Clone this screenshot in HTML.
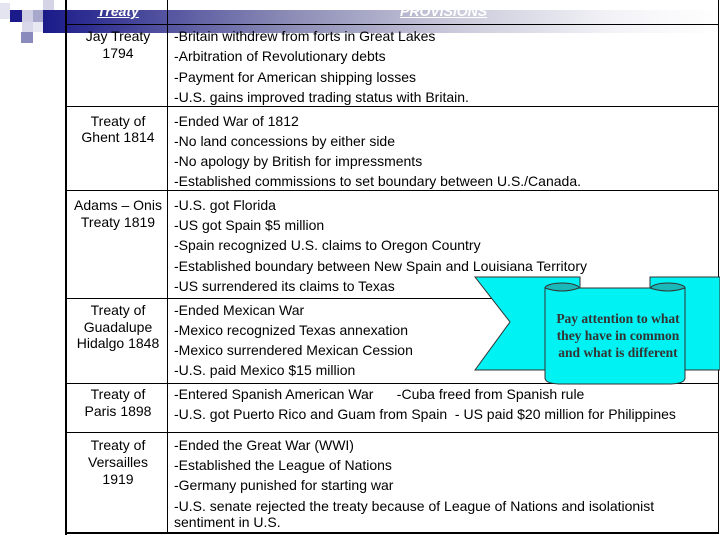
<!DOCTYPE html>
<html><head><meta charset="utf-8"><style>
body{margin:0;width:720px;height:540px;background:#fff;position:relative;overflow:hidden;font-family:"Liberation Sans",Arial,sans-serif;font-size:14px;color:#000}
.a{position:absolute}
.t{position:absolute;white-space:nowrap;line-height:16px}
.c{position:absolute;left:68px;width:100px;text-align:center;line-height:16px;white-space:nowrap}
.h{position:absolute;left:66px;width:653px;height:1px;background:#000}
</style></head><body>
<div class="a" style="left:43px;top:10px;width:677px;height:23px;background:linear-gradient(to right,#1a1a8a 0%,#3a3a96 10%,#8888b4 35%,#c8c8da 60%,#f4f4f8 85%,#fff 100%)"></div>
<div class="a" style="left:0;top:3px;width:10px;height:16px;background:#e4e4f0"></div>
<div class="a" style="left:10px;top:10px;width:12px;height:12px;background:#1a1a8a"></div>
<div class="a" style="left:22px;top:10px;width:11px;height:12px;background:#d0d0e4"></div>
<div class="a" style="left:33px;top:10px;width:10px;height:12px;background:#a8a8cc"></div>
<div class="a" style="left:43px;top:0px;width:11px;height:10px;background:#d4d4e6"></div>
<div class="a" style="left:22px;top:22px;width:11px;height:10px;background:#d8d8ea"></div>
<div class="a" style="left:33px;top:22px;width:10px;height:10px;background:#e8e8f2"></div>
<div class="a" style="left:21px;top:32px;width:12px;height:11px;background:#8a8abc"></div>
<div class="a" style="left:65px;top:0;width:2px;height:535px;background:#000"></div>
<div class="a" style="left:167px;top:0;width:1px;height:534px;background:#000"></div>
<div class="a" style="left:718px;top:0;width:1px;height:534px;background:#000"></div>
<div class="h" style="top:24px"></div>
<div class="h" style="top:106px"></div>
<div class="h" style="top:190px"></div>
<div class="h" style="top:298px"></div>
<div class="h" style="top:383px"></div>
<div class="h" style="top:432px"></div>
<div class="h" style="top:532px;height:2px"></div>
<div class="c" style="top:3px;color:#fff;font-weight:bold;font-style:italic;text-decoration:underline">Treaty</div>
<div class="t" style="left:400px;top:3px;color:#fff;font-weight:bold;font-style:italic;text-decoration:underline">PROVISIONS</div>
<div class="c" style="top:28px">Jay Treaty</div><div class="c" style="top:45px">1794</div>
<div class="c" style="top:113px">Treaty of</div><div class="c" style="top:129px">Ghent 1814</div>
<div class="c" style="top:197px">Adams – Onis</div><div class="c" style="top:214px">Treaty 1819</div>
<div class="c" style="top:302px">Treaty of</div><div class="c" style="top:319px">Guadalupe</div><div class="c" style="top:335px">Hidalgo 1848</div>
<div class="c" style="top:386px">Treaty of</div><div class="c" style="top:403px">Paris 1898</div>
<div class="c" style="top:437px">Treaty of</div><div class="c" style="top:454px">Versailles</div><div class="c" style="top:471px">1919</div>
<div class="t" style="left:174px;top:28px">-Britain withdrew from forts in Great Lakes</div>
<div class="t" style="left:174px;top:48px">-Arbitration of Revolutionary debts</div>
<div class="t" style="left:174px;top:69px">-Payment for American shipping losses</div>
<div class="t" style="left:174px;top:89px">-U.S. gains improved trading status with Britain.</div>
<div class="t" style="left:174px;top:113px">-Ended War of 1812</div>
<div class="t" style="left:174px;top:133px">-No land concessions by either side</div>
<div class="t" style="left:174px;top:153px">-No apology by British for impressments</div>
<div class="t" style="left:174px;top:173px">-Established commissions to set boundary between U.S./Canada.</div>
<div class="t" style="left:174px;top:197px">-U.S. got Florida</div>
<div class="t" style="left:174px;top:217px">-US got Spain $5 million</div>
<div class="t" style="left:174px;top:237px">-Spain recognized U.S. claims to Oregon Country</div>
<div class="t" style="left:174px;top:258px">-Established boundary between New Spain and Louisiana Territory</div>
<div class="t" style="left:174px;top:278px">-US surrendered its claims to Texas</div>
<div class="t" style="left:174px;top:302px">-Ended Mexican War</div>
<div class="t" style="left:174px;top:322px">-Mexico recognized Texas annexation</div>
<div class="t" style="left:174px;top:342px">-Mexico surrendered Mexican Cession</div>
<div class="t" style="left:174px;top:362px">-U.S. paid Mexico $15 million</div>
<div class="t" style="left:174px;top:386px">-Entered Spanish American War &nbsp;&nbsp;&nbsp;&nbsp;&nbsp;-Cuba freed from Spanish rule</div>
<div class="t" style="left:174px;top:406px">-U.S. got Puerto Rico and Guam from Spain &nbsp;- US paid $20 million for Philippines</div>
<div class="t" style="left:174px;top:437px">-Ended the Great War (WWI)</div>
<div class="t" style="left:174px;top:457px">-Established the League of Nations</div>
<div class="t" style="left:174px;top:477px">-Germany punished for starting war</div>
<div class="t" style="left:174px;top:498px">-U.S. senate rejected the treaty because of League of Nations and isolationist</div>
<div class="t" style="left:174px;top:514px">sentiment in U.S.</div>
<svg class="a" style="left:0;top:0" width="720" height="540">
<polygon points="475,277 580,277 580,370 475,370 510,322" fill="#00f2f2" stroke="#333" stroke-width="1"/>
<polygon points="650,277 720,277 720,370 650,370" fill="#00f2f2" stroke="#333" stroke-width="1"/>
<ellipse cx="562" cy="288" rx="17" ry="5" fill="#1ab8b8" stroke="#333"/>
<ellipse cx="668" cy="288" rx="17" ry="5" fill="#1ab8b8" stroke="#333"/>
<path d="M545,288 Q562,294 579,288 L650,288 Q668,294 685,288 L685,378 Q685,384 668,384 L562,384 Q545,384 545,378 Z" fill="#00f2f2" stroke="#333"/>
<text x="618" y="323" text-anchor="middle" font-family="Liberation Serif,serif" font-weight="bold" font-size="13.5" fill="#333">Pay attention to what</text>
<text x="618" y="340" text-anchor="middle" font-family="Liberation Serif,serif" font-weight="bold" font-size="13.5" fill="#333">they have in common</text>
<text x="618" y="357" text-anchor="middle" font-family="Liberation Serif,serif" font-weight="bold" font-size="13.5" fill="#333">and what is different</text>
</svg>
</body></html>
